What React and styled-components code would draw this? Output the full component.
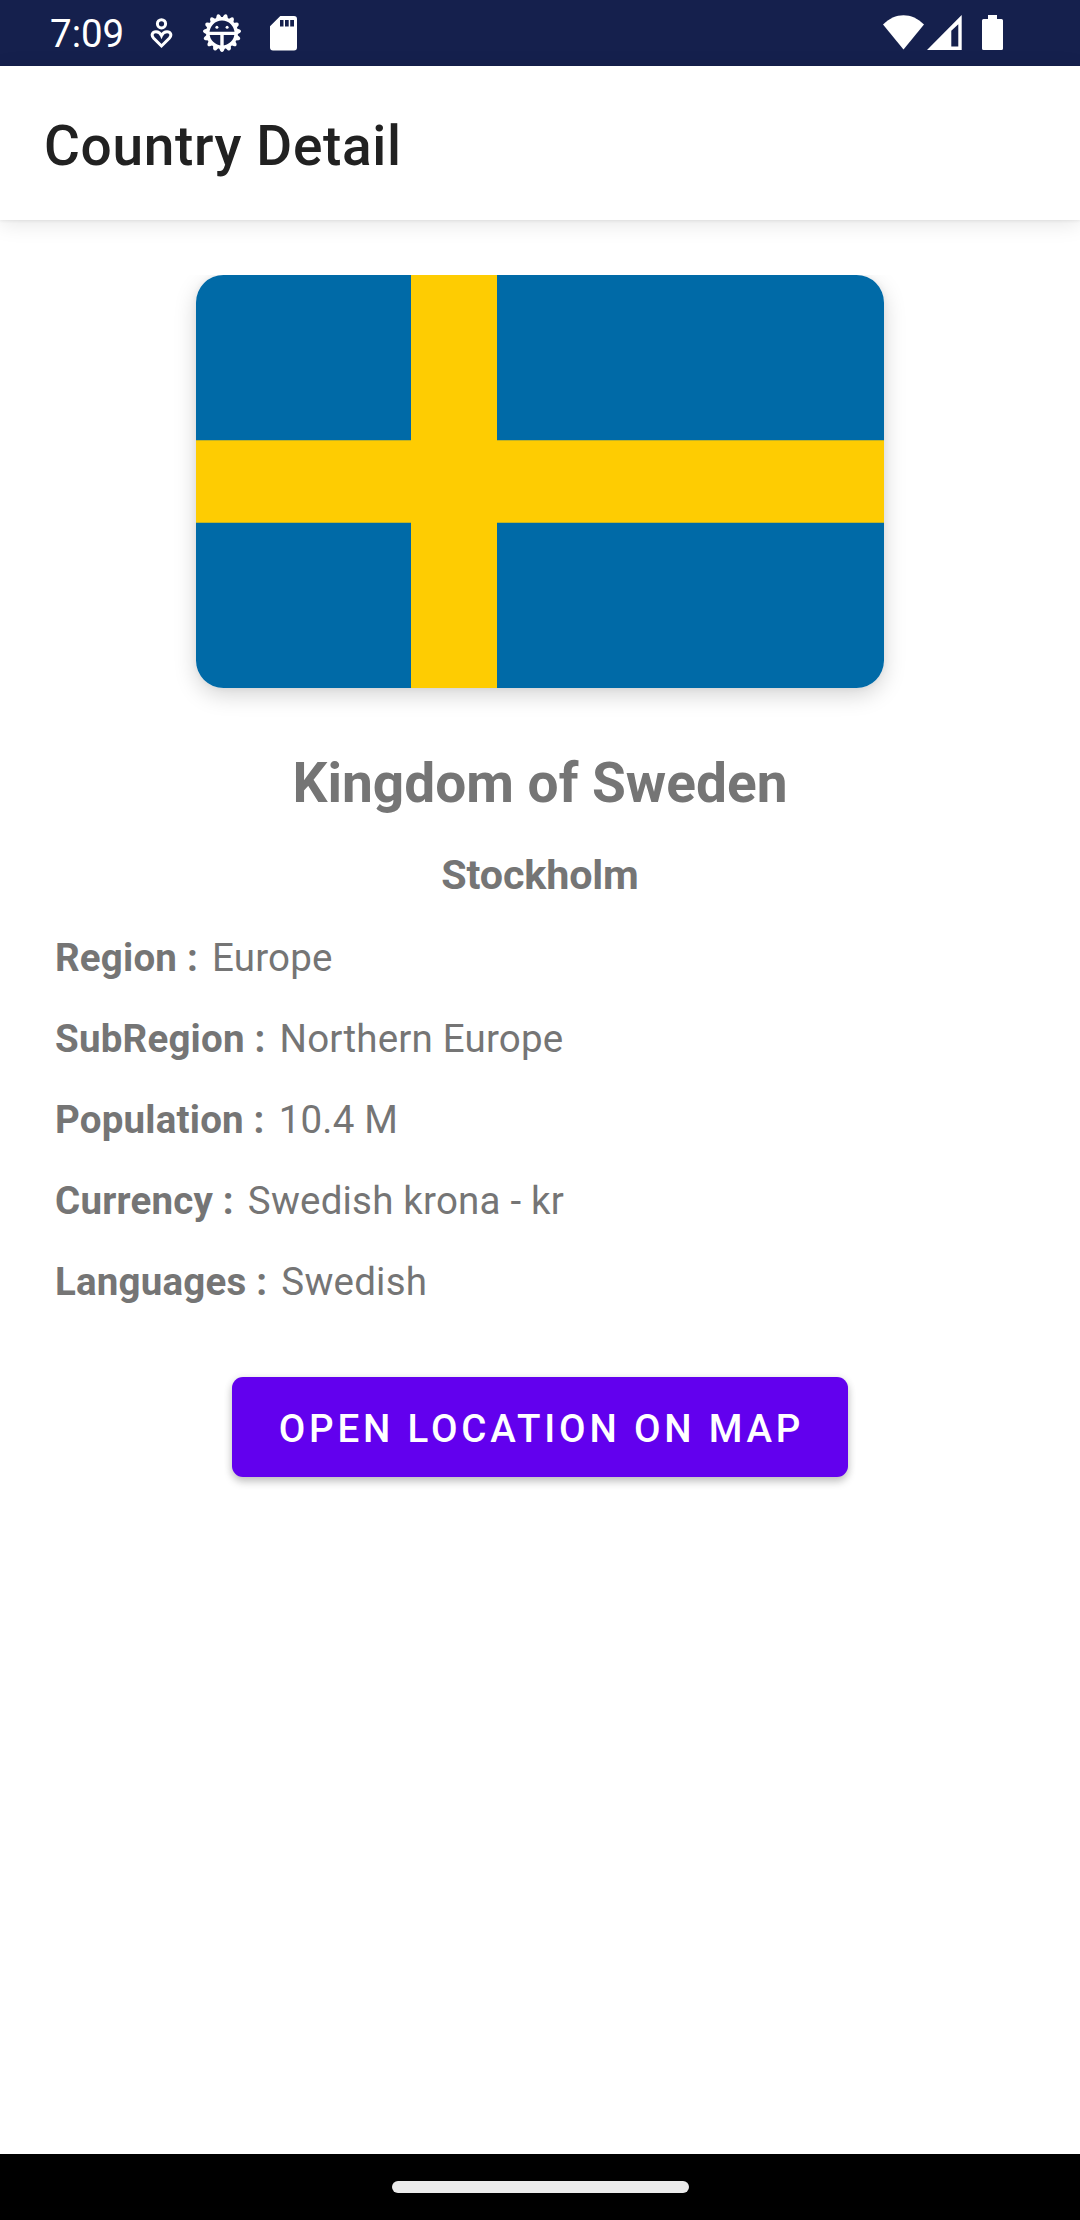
import React from 'react';
import styled, { createGlobalStyle } from 'styled-components';

const GlobalStyle = createGlobalStyle`
  * { box-sizing: border-box; }
  body { margin: 0; background: #fff; font-family: Roboto, "Noto Sans", sans-serif; }
`;

const Screen = styled.div`
  width: 1080px;
  height: 2220px;
  display: flex;
  flex-direction: column;
  background: #fff;
  overflow: hidden;
`;

const StatusBar = styled.header`
  height: 66px;
  flex: none;
  display: flex;
  justify-content: space-between;
  padding: 0 77px 0 50px;
  background: #15204d;
  color: #fff;
`;

const StatusGroup = styled.div`
  display: flex;
  align-items: flex-start;
`;

const Clock = styled.span`
  width: 75px;
  margin-top: 11px;
  font-size: 38.5px;
  line-height: 46px;
  white-space: nowrap;
`;

const StatusIcon = styled.svg`
  display: block;
  flex: none;
  margin-top: ${(p) => p.$top}px;
  margin-left: ${(p) => p.$left}px;
`;

const Toolbar = styled.div`
  position: relative;
  height: 154px;
  flex: none;
  display: flex;
  align-items: center;
  padding: 6px 44px 0;
  background: #fff;
  box-shadow: 0 4px 20px rgba(0, 0, 0, 0.1), 0 1px 3px rgba(0, 0, 0, 0.07);
`;

const Title = styled.h1`
  margin: 0;
  font-size: 55px;
  line-height: 64px;
  font-weight: 500;
  letter-spacing: 0.65px;
  color: #212121;
`;

const Content = styled.main`
  flex: 1;
  display: flex;
  flex-direction: column;
  align-items: center;
  padding: 55px 55px 0;
  color: #757575;
`;

const FlagFrame = styled.div`
  width: 688px;
  height: 413px;
  flex: none;
  border-radius: 27.5px;
  box-shadow: 0 7px 22px rgba(0, 0, 0, 0.17), 0 0 6px rgba(0, 0, 0, 0.06);
  clip-path: inset(0 -50px -50px -50px);
`;

const Flag = styled.svg`
  display: block;
  border-radius: 27.5px;
`;

const CountryName = styled.h2`
  margin: 62px 0 0;
  font-size: 55px;
  line-height: 66px;
  font-weight: 700;
`;

const Capital = styled.h3`
  margin: 34px 0 0;
  font-size: 41.25px;
  line-height: 50px;
  font-weight: 700;
  letter-spacing: -0.15px;
`;

const Facts = styled.dl`
  align-self: stretch;
  margin: 17px 0 0;
`;

const Fact = styled.div`
  height: 81px;
  display: flex;
  align-items: center;
  gap: 14px;
  font-size: 38.5px;
  line-height: 46px;
  letter-spacing: 0.2px;
`;

const Label = styled.dt`
  font-weight: 700;
`;

const Value = styled.dd`
  margin: 0;
`;

const MapButton = styled.button`
  width: 616px;
  height: 100px;
  margin: 55px 0 0;
  padding: 4px 0 0 3px;
  border: 0;
  border-radius: 11px;
  background: #6200ee;
  color: #fff;
  font: 500 38.5px/46px Roboto, sans-serif;
  letter-spacing: 3.8px;
  text-transform: uppercase;
  white-space: nowrap;
  box-shadow: 0 5px 8px rgba(0, 0, 0, 0.2), 0 1px 8px rgba(0, 0, 0, 0.1);
`;

const NavBar = styled.footer`
  height: 66px;
  flex: none;
  display: flex;
  align-items: center;
  justify-content: center;
  background: #000;
`;

const HomePill = styled.div`
  width: 297px;
  height: 11.5px;
  border-radius: 6px;
  background: #ebebeb;
`;

const FACTS = [
  ['Region :', 'Europe'],
  ['SubRegion :', 'Northern Europe'],
  ['Population :', '10.4 M'],
  ['Currency :', 'Swedish krona - kr'],
  ['Languages :', 'Swedish'],
];

const TEETH = Array.from({ length: 15 }, (_, i) => 180 + i * 24);

const HeartPersonIcon = () => (
  <StatusIcon width="24" height="32" viewBox="0 0 24 32" $top={17} $left={25} fill="none" stroke="#fff" strokeWidth="3">
    <circle cx="11.5" cy="6.8" r="4.1" />
    <path d="M11.5 29 L3.7 21.2 C.7 18 2.4 14.8 6 14.8 C8.7 14.8 10.5 16.6 11.5 18.7 C12.5 16.6 14.3 14.8 17 14.8 C20.6 14.8 22.3 18 19.3 21.2 Z" />
  </StatusIcon>
);

const GearFaceIcon = () => (
  <StatusIcon width="40" height="40" viewBox="-20 -20 40 40" $top={13} $left={28}>
    {TEETH.map((a) => (
      <path key={a} d="M-3.2 -14.5 L-1.7 -18 Q0 -20.2 1.7 -18 L3.2 -14.5Z" fill="#fff" transform={`rotate(${a})`} />
    ))}
    <circle r="14.2" fill="none" stroke="#fff" strokeWidth="3.4" />
    <path d="M-13 0.4H13M0 0.4V14" stroke="#fff" strokeWidth="3.4" />
    <circle cx="-5.1" cy="-5.7" r="1.5" fill="#fff" />
    <circle cx="5.1" cy="-5.7" r="1.5" fill="#fff" />
  </StatusIcon>
);

const SdCardIcon = () => (
  <StatusIcon width="27" height="35" viewBox="0 0 27 35" $top={16} $left={28}>
    <path
      fill="#fff"
      fillRule="evenodd"
      d="M10.3 0H24Q27 0 27 3V31.5Q27 34.5 24 34.5H3Q0 34.5 0 31.5V10.3ZM10 4V10.5H13.5V4ZM15 4V10.5H18.7V4ZM20.2 4V10.5H24V4Z"
    />
  </StatusIcon>
);

const WifiIcon = () => (
  <StatusIcon width="42" height="35" viewBox="0 0 42 35" $top={15} $left={0}>
    <path fill="#fff" d="M0 9.6C12 -3 29 -3 41 9.6L20.5 34.6Z" />
  </StatusIcon>
);

const SignalIcon = () => (
  <StatusIcon width="35" height="35" viewBox="0 0 35 35" $top={15} $left={2}>
    <path fill="#fff" fillRule="evenodd" d="M34.7 0V35H0ZM31.3 9.2L24.3 15.8V31.5H31.3Z" />
  </StatusIcon>
);

const BatteryIcon = () => (
  <StatusIcon width="21" height="35" viewBox="0 0 21 35" $top={15} $left={20}>
    <path fill="#fff" d="M6 0H15V4H19.5Q21 4 21 5.5V33.5Q21 35 19.5 35H1.5Q0 35 0 33.5V5.5Q0 4 1.5 4H6Z" />
  </StatusIcon>
);

export default function App() {
  return (
    <Screen>
      <GlobalStyle />
      <StatusBar>
        <StatusGroup>
          <Clock>7:09</Clock>
          <HeartPersonIcon />
          <GearFaceIcon />
          <SdCardIcon />
        </StatusGroup>
        <StatusGroup>
          <WifiIcon />
          <SignalIcon />
          <BatteryIcon />
        </StatusGroup>
      </StatusBar>
      <Toolbar>
        <Title>Country Detail</Title>
      </Toolbar>
      <Content>
        <FlagFrame>
          <Flag width="688" height="413" viewBox="0 0 688 413">
            <path fill="#006aa7" d="M0 0H688V413H0Z" />
            <path fill="#fecc02" d="M215 0H301V413H215ZM0 165.3H688V247.7H0Z" />
          </Flag>
        </FlagFrame>
        <CountryName>Kingdom of Sweden</CountryName>
        <Capital>Stockholm</Capital>
        <Facts>
          {FACTS.map(([label, value]) => (
            <Fact key={label}>
              <Label>{label}</Label>
              <Value>{value}</Value>
            </Fact>
          ))}
        </Facts>
        <MapButton type="button">Open location on map</MapButton>
      </Content>
      <NavBar>
        <HomePill />
      </NavBar>
    </Screen>
  );
}
